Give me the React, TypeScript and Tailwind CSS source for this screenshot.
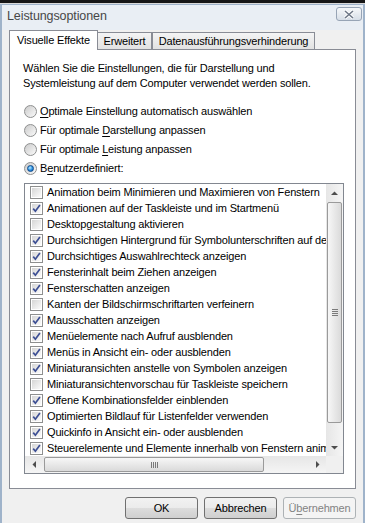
import React from "react";

type Item = { label: string; checked: boolean };

const items: Item[] = [
  { label: "Animation beim Minimieren und Maximieren von Fenstern", checked: false },
  { label: "Animationen auf der Taskleiste und im Startmenü", checked: true },
  { label: "Desktopgestaltung aktivieren", checked: false },
  { label: "Durchsichtigen Hintergrund für Symbolunterschriften auf dem Desktop", checked: true },
  { label: "Durchsichtiges Auswahlrechteck anzeigen", checked: true },
  { label: "Fensterinhalt beim Ziehen anzeigen", checked: true },
  { label: "Fensterschatten anzeigen", checked: true },
  { label: "Kanten der Bildschirmschriftarten verfeinern", checked: false },
  { label: "Mausschatten anzeigen", checked: true },
  { label: "Menüelemente nach Aufruf ausblenden", checked: true },
  { label: "Menüs in Ansicht ein- oder ausblenden", checked: true },
  { label: "Miniaturansichten anstelle von Symbolen anzeigen", checked: true },
  { label: "Miniaturansichtenvorschau für Taskleiste speichern", checked: false },
  { label: "Offene Kombinationsfelder einblenden", checked: true },
  { label: "Optimierten Bildlauf für Listenfelder verwenden", checked: true },
  { label: "Quickinfo in Ansicht ein- oder ausblenden", checked: true },
  { label: "Steuerelemente und Elemente innerhalb von Fenstern animieren", checked: true },
];

const CheckBox = ({ checked }: { checked: boolean }) => (
  <span className="relative flex h-[13px] w-[13px] shrink-0 items-center justify-center border border-[#8e8f8f] bg-white">
    <span className="absolute inset-[1px] bg-gradient-to-br from-[#d6d6d6] to-[#fbfbfb]" />
    {checked && (
      <svg className="relative" width="9" height="9" viewBox="0 0 9 9">
        <path d="M1.2 4.6 L3.4 7.2 L7.9 0.9" stroke="#3d4f94" strokeWidth="1.7" fill="none" />
      </svg>
    )}
  </span>
);

const Radio = ({ checked }: { checked: boolean }) => (
  <span className="flex h-[13px] w-[13px] shrink-0 items-center justify-center rounded-full border border-[#8e8f8f] bg-gradient-to-br from-[#cbcbcb] to-[#fbfbfb]">
    {checked && (
      <span className="h-[7px] w-[7px] rounded-full border border-[#0d4a8c] bg-[radial-gradient(circle_at_40%_35%,#b8ecff,#2a8ee0_55%,#0c56a8)]" />
    )}
  </span>
);

const Arrow = ({ dir }: { dir: "up" | "down" | "left" | "right" }) => {
  const d = {
    up: "M0 4 L3.5 0.5 L7 4 Z",
    down: "M0 0 L3.5 3.5 L7 0 Z",
    left: "M4 0 L0.5 3.5 L4 7 Z",
    right: "M0 0 L3.5 3.5 L0 7 Z",
  }[dir];
  const vertical = dir === "up" || dir === "down";
  return (
    <svg width={vertical ? 7 : 4} height={vertical ? 4 : 7} viewBox={vertical ? "0 0 7 4" : "0 0 4 7"}>
      <path d={d} fill="#4d4d4d" />
    </svg>
  );
};

const Mnemonic = ({ before, key_, after }: { before: string; key_: string; after: string }) => (
  <span>
    {before}
    <span className="underline underline-offset-2">{key_}</span>
    {after}
  </span>
);

const Button = ({ children, disabled }: { children: React.ReactNode; disabled?: boolean }) => (
  <button
    className={
      disabled
        ? "h-[22px] w-[73px] rounded-[3px] border border-[#adb2b5] bg-[#f4f4f4] text-[#838383]"
        : "h-[22px] w-[73px] rounded-[3px] border border-[#707070] bg-[linear-gradient(#f2f2f2_0%,#ebebeb_50%,#dddddd_50%,#cfcfcf_100%)] text-black"
    }
  >
    {children}
  </button>
);

export default function App() {
  return (
    <div className="h-[523px] w-[365px] overflow-hidden bg-white font-['Liberation_Sans',Arial,sans-serif] text-[11px] leading-[15px] tracking-[-0.16px] text-black">
      {/* bottom edge of the window behind */}
      <div className="h-[3px] bg-[#161616]" />
      <div className="h-[1px] bg-[#d9d9d9]" />

      <div className="flex h-[519px] flex-col border-x-2 border-t border-[#9fb3ca] bg-[#f0f0f0]">
        {/* title bar */}
        <div className="flex h-[25px] items-start justify-between bg-[#e9eef4] pl-[5px] pr-[1px] pt-[2px]">
          <span className="mt-[2px] text-[12.5px] leading-[15px] tracking-[-0.1px] text-[#474747]">Leistungsoptionen</span>
          <span className="flex h-[14px] w-[26px] items-center justify-center rounded-[3px] border border-[#97a4b5] bg-gradient-to-b from-[#f6f8fa] to-[#d7dee7]">
            <svg width="12" height="9" viewBox="0 0 12 9">
              <path d="M2 1 L10 8 M10 1 L2 8" stroke="#ffffff" strokeWidth="3.2" />
              <path d="M2 1 L10 8 M10 1 L2 8" stroke="#6d7787" strokeWidth="1.6" />
            </svg>
          </span>
        </div>

        <div className="flex flex-col px-[7px]">
          {/* tabs */}
          <div className="flex h-[19px] items-end">
            <div className="relative z-10 -mb-[1px] flex h-[20px] w-[89px] items-center justify-center border-x border-t border-[#898c95] bg-white pb-[1px]">
              Visuelle Effekte
            </div>
            <div className="flex h-[17px] w-[54px] items-center justify-center border-r border-t border-[#898c95] bg-gradient-to-b from-[#f4f4f4] to-[#e2e2e2]">
              Erweitert
            </div>
            <div className="flex h-[17px] w-[163px] items-center justify-center border-x border-t border-[#898c95] bg-gradient-to-b from-[#f4f4f4] to-[#e2e2e2]">
              Datenausführungsverhinderung
            </div>
          </div>

          {/* panel */}
          <div className="flex h-[440px] flex-col border border-[#898c95] bg-white pl-[13px] pt-[11px]">
            <p className="leading-[15px]">
              Wählen Sie die Einstellungen, die für Darstellung und
              <br />
              Systemleistung auf dem Computer verwendet werden sollen.
            </p>

            <div className="mt-[11px] flex flex-col">
              <label className="flex h-[19px] items-center gap-[3px] pl-[1px]">
                <Radio checked={false} />
                <Mnemonic before="" key_="O" after="ptimale Einstellung automatisch auswählen" />
              </label>
              <label className="flex h-[19px] items-center gap-[3px] pl-[1px]">
                <Radio checked={false} />
                <Mnemonic before="Für optimale " key_="D" after="arstellung anpassen" />
              </label>
              <label className="flex h-[19px] items-center gap-[3px] pl-[1px]">
                <Radio checked={false} />
                <Mnemonic before="Für optimale " key_="L" after="eistung anpassen" />
              </label>
              <label className="flex h-[19px] items-center gap-[3px] pl-[1px]">
                <Radio checked />
                <Mnemonic before="B" key_="e" after="nutzerdefiniert:" />
              </label>
            </div>

            {/* list box */}
            <div className="ml-[1px] mt-[5px] flex h-[291px] w-[320px] flex-col border border-[#828790]">
              <div className="flex h-[272px]">
                <div className="flex w-[301px] flex-col overflow-hidden">
                  {items.map((it) => (
                    <div key={it.label} className="flex h-[16px] shrink-0 items-center gap-[4px] whitespace-nowrap pl-[5px]">
                      <CheckBox checked={it.checked} />
                      <span>{it.label}</span>
                    </div>
                  ))}
                </div>
                {/* vertical scrollbar */}
                <div className="flex w-[17px] flex-col bg-gradient-to-r from-[#e6e6e6] to-[#f5f5f5]">
                  <div className="flex h-[17px] items-center justify-center">
                    <Arrow dir="up" />
                  </div>
                  <div className="ml-[1px] mr-[1px] mt-[1px] flex h-[221px] items-center justify-center rounded-[2px] border border-[#9a9a9a] bg-gradient-to-r from-[#f7f7f7] to-[#dadada]">
                    <div className="flex flex-col gap-[1px]">
                      <span className="h-[1px] w-[6px] bg-[#7a7a7a]" />
                      <span className="h-[1px] w-[6px] bg-[#7a7a7a]" />
                      <span className="h-[1px] w-[6px] bg-[#7a7a7a]" />
                      <span className="h-[1px] w-[6px] bg-[#7a7a7a]" />
                    </div>
                  </div>
                  <div className="flex-1" />
                  <div className="flex h-[17px] items-center justify-center">
                    <Arrow dir="down" />
                  </div>
                </div>
              </div>
              {/* horizontal scrollbar */}
              <div className="flex h-[17px]">
                <div className="flex w-[301px] items-center bg-gradient-to-b from-[#e6e6e6] to-[#f5f5f5]">
                  <div className="flex w-[17px] items-center justify-center">
                    <Arrow dir="left" />
                  </div>
                  <div className="ml-[2px] flex h-[15px] w-[220px] items-center justify-center rounded-[2px] border border-[#9a9a9a] bg-gradient-to-b from-[#f7f7f7] to-[#dadada]">
                    <div className="flex gap-[1px]">
                      <span className="h-[6px] w-[1px] bg-[#7a7a7a]" />
                      <span className="h-[6px] w-[1px] bg-[#7a7a7a]" />
                      <span className="h-[6px] w-[1px] bg-[#7a7a7a]" />
                      <span className="h-[6px] w-[1px] bg-[#7a7a7a]" />
                    </div>
                  </div>
                  <div className="flex-1" />
                  <div className="flex w-[17px] items-center justify-center">
                    <Arrow dir="right" />
                  </div>
                </div>
                <div className="w-[17px] bg-[#f0f0f0]" />
              </div>
            </div>
          </div>

          {/* buttons */}
          <div className="mt-[8px] flex justify-end gap-[6px]">
            <Button>OK</Button>
            <Button>Abbrechen</Button>
            <Button disabled>
              <Mnemonic before="Ü" key_="b" after="ernehmen" />
            </Button>
          </div>
        </div>
      </div>
    </div>
  );
}
